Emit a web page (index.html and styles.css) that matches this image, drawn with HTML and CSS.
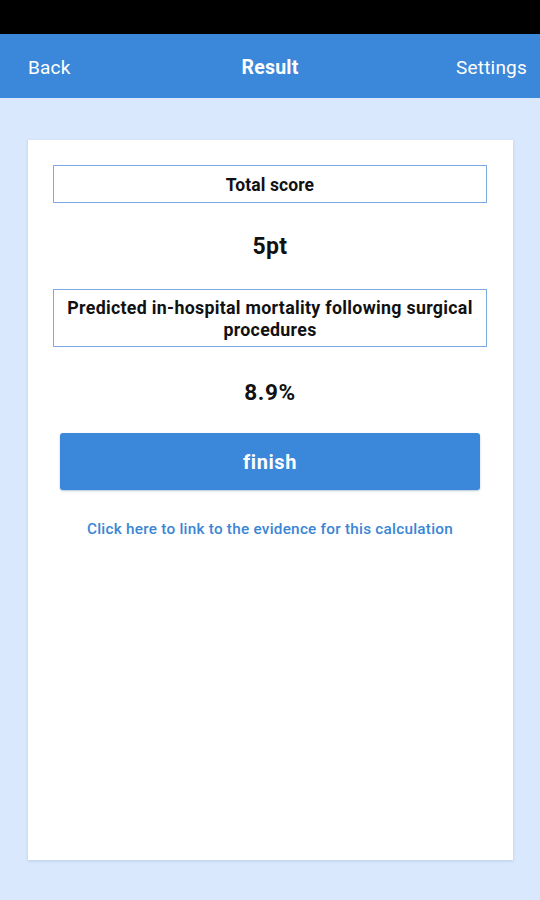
FILE: index.html
```html
<!DOCTYPE html>
<html>
<head>
<meta charset="utf-8">
<link rel="stylesheet" href="styles.css">
</head>
<body>
<div class="status"></div>
<header class="bar">
  <span class="nav-left">Back</span>
  <span class="title">Result</span>
  <span class="nav-right">Settings</span>
</header>
<main class="page">
  <section class="card">
    <div class="label-box single">Total score</div>
    <div class="value score">5pt</div>
    <div class="label-box double">Predicted in-hospital mortality following surgical procedures</div>
    <div class="value pct">8.9%</div>
    <button class="finish">finish</button>
    <a class="link">Click here to link to the evidence for this calculation</a>
  </section>
</main>
</body>
</html>
```

FILE: styles.css
```css
* { box-sizing: border-box; }
html, body { margin: 0; padding: 0; }
body {
  width: 540px;
  height: 900px;
  background: #d9e8fc;
  font-family: Roboto, "Liberation Sans", Arial, sans-serif;
  display: flex;
  flex-direction: column;
  overflow: hidden;
}
.status { height: 34px; background: #000; flex: none; }
.bar {
  height: 64px;
  flex: none;
  background: #3b87d9;
  color: #fff;
  display: flex;
  align-items: center;
  justify-content: space-between;
  padding: 2px 13px 0 28px;
  font-size: 19px;
  letter-spacing: 0.2px;
  position: relative;
}
.bar .title {
  font-weight: bold;
  position: absolute;
  left: 0; right: 0;
  top: 2px; bottom: 0;
  display: flex;
  align-items: center;
  justify-content: center;
  pointer-events: none;
  font-size: 19.5px;
}
.page {
  flex: 1;
  padding: 42px 27px 40px 28px;
  display: flex;
}
.card {
  flex: 1;
  background: #fff;
  box-shadow: 0 1px 3px rgba(100, 130, 170, 0.25);
  padding: 25px 26px 0 25px;
  display: flex;
  flex-direction: column;
  align-items: stretch;
}
.label-box {
  border: 1.5px solid #7eaae4;
  text-align: center;
  font-weight: bold;
  font-size: 17.5px;
  color: #111;
  display: flex;
  align-items: center;
  justify-content: center;
}
.label-box.single { height: 38px; letter-spacing: 0.1px; padding-top: 1px; }
.label-box.double {
  height: 58px;
  font-size: 17.8px;
  line-height: 22px;
  letter-spacing: 0.3px;
  padding: 1px 2px 0;
}
.value {
  text-align: center;
  font-weight: bold;
  color: #111;
  display: flex;
  align-items: center;
  justify-content: center;
}
.score { height: 86px; font-size: 23px; letter-spacing: 0.4px; padding-top: 1px; }
.pct { height: 86px; font-size: 22.5px; letter-spacing: 0.6px; padding-top: 3px; }
.finish {
  margin: 0 7px;
  height: 57px;
  border: none;
  border-radius: 3px;
  background: #3b87d9;
  color: #fff;
  font-family: inherit;
  font-weight: bold;
  font-size: 20px;
  letter-spacing: 0.6px;
  padding-top: 2px;
  box-shadow: 0 1px 2px rgba(0, 60, 140, 0.3);
}
.link {
  margin-top: 30px;
  text-align: center;
  color: #3a86d6;
  font-size: 15.3px;
  letter-spacing: 0.25px;
  font-weight: 500;
}
```
